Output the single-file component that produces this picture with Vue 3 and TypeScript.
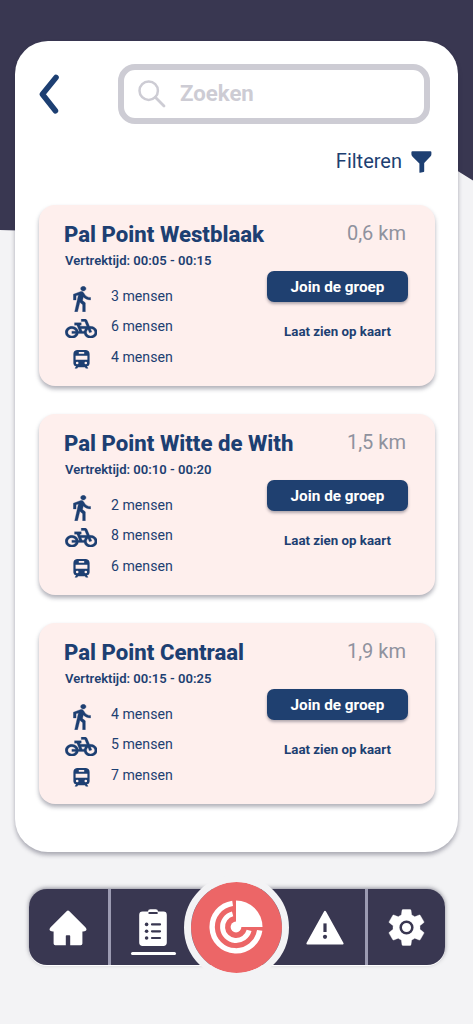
<script setup lang="ts">
interface Point {
  name: string
  departure: string
  distance: string
  walkers: number
  cyclists: number
  riders: number
}

const points: Point[] = [
  { name: 'Pal Point Westblaak', departure: '00:05 - 00:15', distance: '0,6 km', walkers: 3, cyclists: 6, riders: 4 },
  { name: 'Pal Point Witte de With', departure: '00:10 - 00:20', distance: '1,5 km', walkers: 2, cyclists: 8, riders: 6 },
  { name: 'Pal Point Centraal', departure: '00:15 - 00:25', distance: '1,9 km', walkers: 4, cyclists: 5, riders: 7 },
]
</script>

<template>
  <div class="screen">
    <svg class="backdrop" viewBox="0 0 473 240" aria-hidden="true">
      <path d="M0 0H473V180.5L440 160L300 200Q150 235 0 230Z" fill="#393751" />
    </svg>

    <main class="panel">
      <header class="top">
        <button class="back" aria-label="Terug">
          <svg width="22" height="42" viewBox="0 0 22 42">
            <path d="M17 4.4L3.4 21.2L16.4 37.8" fill="none" stroke="#1d3f72" stroke-width="5.6" stroke-linecap="round" stroke-linejoin="round" />
          </svg>
        </button>
        <label class="search">
          <svg width="28" height="28" viewBox="0 0 28 28" fill="none" stroke="#cdccd4" stroke-width="2.5">
            <circle cx="10.7" cy="10.7" r="9.2" />
            <path d="M17.3 17.3L26 26" stroke-width="2.8" stroke-linecap="round" />
          </svg>
          <span>Zoeken</span>
        </label>
      </header>

      <button class="filter">
        <span>Filteren</span>
        <svg width="21" height="22" viewBox="0 0 21 22">
          <path d="M1.4 .3H19.4Q20.4 .3 20.4 1.3V3.2Q20.4 4.6 19.4 5.6L13.2 12V20.2Q13.2 20.8 12.6 21L9 21.8Q8.4 21.8 8.4 21.2V12.6L1.6 5.8Q.4 4.6 .4 3.2V1.3Q.4 .3 1.4 .3Z" fill="#1d3f72" />
        </svg>
      </button>

      <section class="list">
        <article v-for="point in points" :key="point.name" class="card">
          <div class="info">
            <h2>{{ point.name }}</h2>
            <p class="time">Vertrektijd: {{ point.departure }}</p>
            <ul>
              <li>
                <svg class="walk" viewBox="5.7 1.3 13.6 21.9" preserveAspectRatio="none">
                  <path stroke="#1d3f72" stroke-width=".3" d="M13.5 5.5c1.1 0 2-.9 2-2s-.9-2-2-2-2 .9-2 2 .9 2 2 2zM9.8 8.9L7 23h2.1l1.8-8 2.1 2v6h2v-7.5l-2.1-2 .6-3C14.8 12 16.8 13 19 13v-2c-1.9 0-3.5-1-4.3-2.4l-1-1.6c-.4-.6-1-1-1.7-1-.3 0-.5.1-.8.1L6 8.3V13h2V9.6l1.8-.7z" />
                </svg>
                <span>{{ point.walkers }} mensen</span>
              </li>
              <li>
                <svg class="bike" viewBox="-.1 3.9 24.2 16.2" preserveAspectRatio="none">
                  <path stroke="#1d3f72" stroke-width=".2" d="M18.18 10l-1.7-4.68C16.19 4.53 15.44 4 14.6 4H12v2h2.6l1.46 4h-4.81l-.36-1H12V7H7v2h1.75l1.82 5H9.9c-.44-2.23-2.31-3.88-4.65-3.99C2.45 9.87 0 12.2 0 15c0 2.8 2.2 5 5 5 2.46 0 4.45-1.69 4.9-4h4.2c.44 2.23 2.31 3.88 4.65 3.99 2.8.13 5.25-2.19 5.25-5 0-2.8-2.2-5-5-5h-.82zM7.82 16c-.4 1.17-1.49 2-2.82 2-1.68 0-3-1.32-3-3s1.32-3 3-3c1.33 0 2.42.83 2.82 2H5v2h2.82zm6.28-2h-1.4l-.73-2H15c-.44.58-.76 1.25-.9 2zm4.9 4c-1.68 0-3-1.32-3-3 0-.93.41-1.73 1.05-2.28l.96 2.64 1.88-.68-.97-2.67c.03 0 .06-.01.08-.01 1.68 0 3 1.32 3 3s-1.32 3-3 3z" />
                </svg>
                <span>{{ point.cyclists }} mensen</span>
              </li>
              <li>
                <svg class="train" viewBox="0 0 17 19">
                  <path fill-rule="evenodd" d="M4 0H13Q16.6 .6 16.6 4V13.5Q16.6 16 14 16.3L15.3 18.6H12.8L12 17.3H5L4.2 18.6H1.7L3 16.3Q.4 16 .4 13.5V4Q.4 .6 4 0ZM5.8 2V3.7H11.2V2ZM2.6 5.8V9.8H14.4V5.8ZM4.2 11.7A1.3 1.3 0 1 0 4.2 14.3A1.3 1.3 0 1 0 4.2 11.7ZM12.8 11.7A1.3 1.3 0 1 0 12.8 14.3A1.3 1.3 0 1 0 12.8 11.7Z" />
                </svg>
                <span>{{ point.riders }} mensen</span>
              </li>
            </ul>
          </div>
          <div class="actions">
            <span class="distance">{{ point.distance }}</span>
            <button class="join">Join de groep</button>
            <a class="map">Laat zien op kaart</a>
          </div>
        </article>
      </section>
    </main>

    <nav class="nav">
      <a class="tab home">
        <svg width="38" height="36" viewBox="0 0 38 36" fill="#fff">
          <path d="M17.6 1.2Q19 0 20.4 1.2L36.4 17.2Q38.6 19.6 36.4 21Q35.4 21.5 33.4 21.4V33.6Q33.4 35.3 31.7 35.3H21.2V26Q21.2 25.2 20.4 25.2H17.6Q16.8 25.2 16.8 26V35.3H6.3Q4.6 35.3 4.6 33.6V21.4Q2.6 21.5 1.6 21Q-.6 19.6 1.6 17.2Z" />
        </svg>
      </a>
      <a class="tab tasks">
        <svg width="28" height="38" viewBox="0 0 28 38">
          <path d="M9 2.6Q9 .3 11.4 .3H16.6Q19 .3 19 2.6H24.4Q27.8 2.6 27.8 6V33.6Q27.8 37 24.4 37H3.6Q.2 37 .2 33.6V6Q.2 2.6 3.6 2.6Z" fill="#fff" />
          <path d="M10.4 4H17.8M13 15.4H21M13 22.3H21M13 29H21" stroke="#393751" stroke-width="2.2" stroke-linecap="round" />
          <g fill="#393751"><circle cx="7.6" cy="15.4" r="1.8" /><circle cx="7.6" cy="22.3" r="1.8" /><circle cx="7.6" cy="29" r="1.8" /></g>
        </svg>
        <i class="underline"></i>
      </a>
      <a class="tab alerts">
        <svg width="38" height="36" viewBox="0 0 38 36">
          <path d="M19 1.8L36.6 33.6H1.4Z" fill="#fff" stroke="#fff" stroke-width="2" stroke-linejoin="round" />
          <path d="M19 13.4V22" stroke="#393751" stroke-width="3.2" />
          <circle cx="19" cy="26.8" r="2.1" fill="#393751" />
        </svg>
      </a>
      <a class="tab settings">
        <svg width="45" height="45" viewBox="0 0 24 24">
          <path fill="#fff" d="M19.14 12.94c.04-.3.06-.61.06-.94 0-.32-.02-.64-.07-.94l2.03-1.58c.18-.14.23-.41.12-.61l-1.92-3.32c-.12-.22-.37-.29-.59-.22l-2.39.96c-.5-.38-1.03-.7-1.62-.94l-.36-2.54c-.04-.24-.24-.41-.48-.41h-3.84c-.24 0-.43.17-.47.41l-.36 2.54c-.59.24-1.13.57-1.62.94l-2.39-.96c-.22-.08-.47 0-.59.22L2.74 8.87c-.12.21-.08.47.12.61l2.03 1.58c-.05.3-.09.63-.09.94s.02.64.07.94l-2.03 1.58c-.18.14-.23.41-.12.61l1.92 3.32c.12.22.37.29.59.22l2.39-.96c.5.38 1.03.7 1.62.94l.36 2.54c.05.24.24.41.48.41h3.84c.24 0 .44-.17.47-.41l.36-2.54c.59-.24 1.13-.56 1.62-.94l2.39.96c.22.08.47 0 .59-.22l1.92-3.32c.12-.22.07-.47-.12-.61l-2.01-1.58z" stroke="#fff" stroke-width=".2" />
          <circle cx="12" cy="12" r="3.1" fill="none" stroke="#393751" stroke-width="1.35" />
        </svg>
      </a>
      <a class="hub">
        <svg width="56" height="56" viewBox="-28 -28 56 56" fill="none" stroke="#fff">
          <path d="M-3.4 -23.7A23.9 23.9 0 1 0 23.7 3.4" stroke-width="5.4" />
          <path d="M-3.4 -13.1A13.5 13.5 0 1 0 13.1 3.4" stroke-width="5" />
          <path d="M0 0V-26.5A26.5 26.5 0 0 1 26.5 0Z" fill="#fff" stroke="none" />
          <circle r="5.4" fill="#fff" stroke="none" />
        </svg>
      </a>
    </nav>
  </div>
</template>

<style>
body {
  margin: 0;
  background: #f3f3f5;
}
</style>

<style scoped>
.screen {
  position: relative;
  box-sizing: border-box;
  width: 473px;
  height: 1024px;
  padding: 41px 15px 0;
  overflow: hidden;
  background: #f3f3f5;
  color: #1d3f72;
  font-family: Roboto, "Liberation Sans", sans-serif;
}
.backdrop {
  position: absolute;
  top: 0;
  left: 0;
  width: 473px;
  height: 240px;
}
button {
  padding: 0;
  border: 0;
  background: none;
  color: inherit;
  font: inherit;
}
svg {
  display: block;
  flex: none;
}
.panel {
  position: relative;
  box-sizing: border-box;
  width: 443px;
  height: 811px;
  padding: 23px 23px 0 24px;
  border-radius: 33px;
  background: #fff;
  box-shadow: 0 3px 4px rgba(40, 40, 60, .36);
}
.top {
  display: flex;
  align-items: center;
  justify-content: space-between;
  height: 60px;
  padding-right: 5px;
}
.search {
  display: flex;
  align-items: center;
  box-sizing: border-box;
  width: 312px;
  height: 60px;
  padding: 0 0 1px 14px;
  gap: 14px;
  border: 6px solid #cdccd4;
  border-radius: 17px;
  color: #cdccd4;
  font-size: 22.2px;
  font-weight: 700;
}
.search span {
  margin-top: -2px;
}
.filter {
  display: flex;
  align-items: center;
  gap: 9px;
  height: 24px;
  margin: 26px 3px 0 auto;
  font-size: 20px;
}
.filter span {
  margin-top: -2px;
}
.list {
  display: grid;
  grid-template-columns: minmax(0, 1fr);
  gap: 28px;
  margin-top: 31px;
}
.card {
  display: flex;
  justify-content: space-between;
  box-sizing: border-box;
  height: 181px;
  padding: 15px 27px 0 25px;
  border-radius: 16px;
  background: #feefed;
  box-shadow: 0 3px 4px rgba(40, 40, 60, .36);
}
.info {
  flex: 1;
  min-width: 0;
}
h2 {
  margin: 0;
  font-size: 22.2px;
  line-height: 28px;
  font-weight: 800;
  white-space: nowrap;
}
.time {
  margin: 4px 0 0 1px;
  font-size: 13.05px;
  line-height: 18px;
  font-weight: 600;
}
ul {
  margin: 10px 0 0;
  padding: 0;
  list-style: none;
}
li {
  display: grid;
  grid-template-columns: 34px auto;
  column-gap: 13px;
  align-items: center;
  height: 30px;
  margin-bottom: 1px;
  font-size: 14.15px;
}
li svg {
  justify-self: center;
  fill: #1d3f72;
}
.walk {
  width: 18px;
  height: 26px;
  margin: 6px 0 0 2px;
}
.bike {
  width: 32.5px;
  height: 19.5px;
  margin-top: 5px;
}
.train {
  width: 17px;
  height: 19px;
  margin-top: 5px;
}
.actions {
  display: flex;
  flex-direction: column;
  align-items: center;
  width: 141px;
  flex: none;
}
.distance {
  align-self: flex-end;
  margin-right: 2px;
  color: #8f929e;
  font-size: 20px;
  line-height: 26px;
}
.join {
  width: 141px;
  height: 31px;
  margin-top: 25px;
  border-radius: 7px;
  background: #1f4070;
  box-shadow: 0 2px 3px rgba(40, 40, 60, .36);
  color: #fff;
  font-size: 15.3px;
  font-weight: 700;
}
.map {
  margin-top: 21px;
  font-size: 13.3px;
  line-height: 18px;
  font-weight: 700;
}
.nav {
  position: relative;
  display: grid;
  grid-template-columns: 82.5px 84px 1fr 82px 77px;
  box-sizing: border-box;
  width: 416px;
  height: 76px;
  margin: 37px 0 0 13.5px;
  border-radius: 18px;
  background: #393751;
  box-shadow: 0 1px 0 #fff, 0 -1px 4px rgba(40, 40, 60, .5);
}
.tab {
  display: flex;
  align-items: center;
  justify-content: center;
}
.home {
  padding-top: 1px;
  border-right: 3px solid #9c9bb2;
}
.tasks {
  flex-direction: column;
  gap: 5px;
  padding-top: 10px;
}
.underline {
  width: 45px;
  height: 2.5px;
  border-radius: 2px;
  background: #fff;
}
.alerts {
  grid-column: 4;
  padding-top: 2px;
  border-right: 3px solid #9c9bb2;
}
.hub {
  position: absolute;
  top: -14.5px;
  left: 155px;
  display: flex;
  align-items: center;
  justify-content: center;
  width: 91px;
  height: 91px;
  border: 7px solid #f3f3f5;
  border-radius: 50%;
  background: #ec6667;
  background-clip: padding-box;
}
</style>
